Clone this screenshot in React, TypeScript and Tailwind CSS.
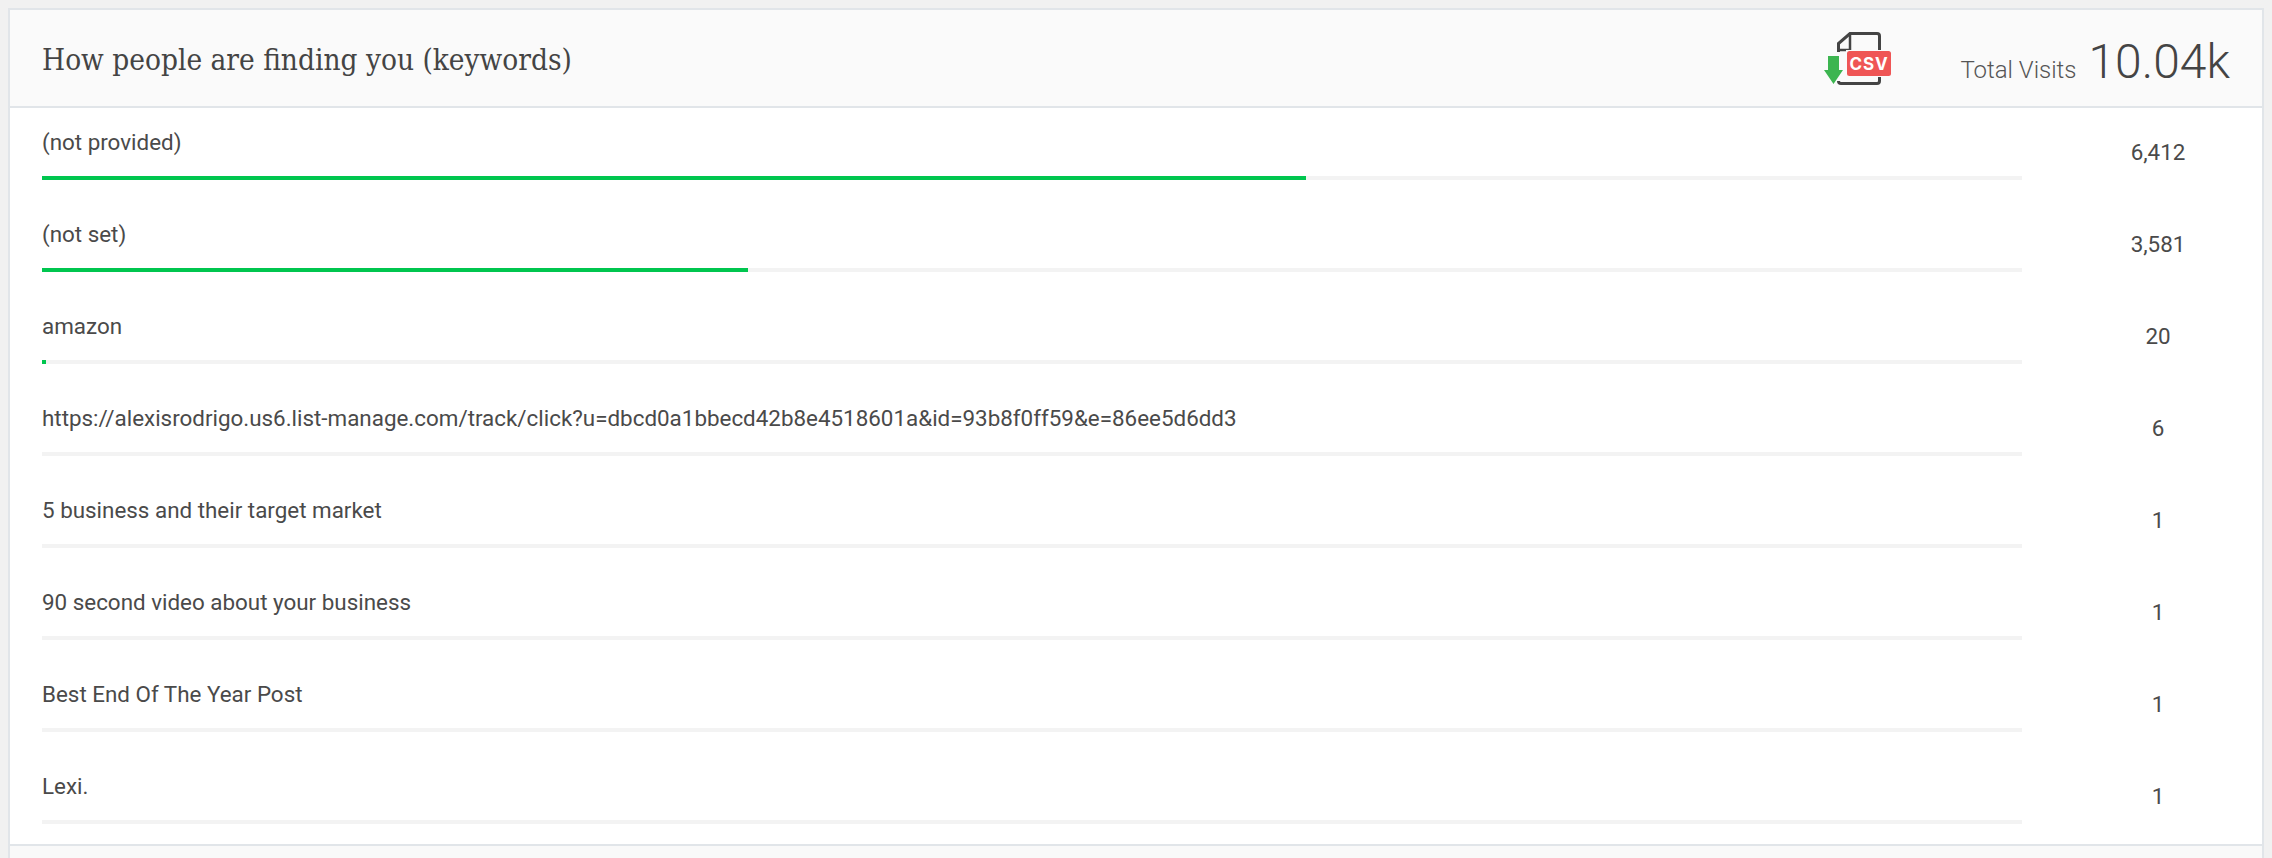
const rows = [
  { label: "(not provided)", value: "6,412", bar: 1264 },
  { label: "(not set)", value: "3,581", bar: 706 },
  { label: "amazon", value: "20", bar: 4 },
  { label: "https://alexisrodrigo.us6.list-manage.com/track/click?u=dbcd0a1bbecd42b8e4518601a&id=93b8f0ff59&e=86ee5d6dd3", value: "6", bar: 0 },
  { label: "5 business and their target market", value: "1", bar: 0 },
  { label: "90 second video about your business", value: "1", bar: 0 },
  { label: "Best End Of The Year Post", value: "1", bar: 0 },
  { label: "Lexi.", value: "1", bar: 0 },
];

function CsvIcon() {
  return (
    <svg width="70" height="56" viewBox="0 0 70 56" className="block">
      <path d="M14.5 22 V13.5 L26 3.5 H53 Q55.5 3.5 55.5 6 V22" fill="none" stroke="#444444" strokeWidth="3" />
      <path d="M26 3.5 V20 H14.5" fill="none" stroke="#444444" strokeWidth="2.5" />
      <path d="M14.5 51 Q14.5 53.5 17 53.5 H53 Q55.5 53.5 55.5 51 V46" fill="none" stroke="#444444" strokeWidth="3" />
      <rect x="22" y="20" width="46" height="27" fill="#fafafa" />
      <rect x="23" y="21" width="44" height="25" rx="2.5" fill="#ef5555" />
      <text x="45" y="39.5" textAnchor="middle" fill="#ffffff" fontFamily="Inter, sans-serif" fontWeight="700" fontSize="17" letterSpacing="0.8">CSV</text>
      <path d="M4 26 H15 V40 H19 L9.5 54 L0 40 H4 Z" fill="#3cb550" />
    </svg>
  );
}

export default function App() {
  return (
    <div className="h-[858px] w-[2272px] bg-[#f1f1f1] pt-2 pl-2 pr-2 font-['Roboto',sans-serif] text-[#4a4a4a]">
      <div className="flex h-[850px] flex-col border-x-2 border-t-2 border-[#e1e5e9] bg-white">
        <div className="flex h-[98px] items-center justify-between border-b-2 border-[#e1e5e9] bg-[#fafafa] pl-8 pr-8">
          <h2 className="pt-1.5 font-['DejaVu_Serif_Condensed','DejaVu_Serif',serif] text-[29.5px] leading-none text-[#444444]">
            How people are finding you (keywords)
          </h2>
          <div className="flex items-center">
            <CsvIcon />
            <div className="mt-2.5 ml-[66px] flex items-baseline">
              <span className="text-[24px] font-light text-[#555555]">Total Visits</span>
              <span className="ml-3 text-[48px] leading-none font-light text-[#444444]">10.04k</span>
            </div>
          </div>
        </div>
        <div className="flex flex-col">
          {rows.map((r) => (
            <div key={r.label} className="flex h-[92px] pl-8">
              <div className="flex w-[1980px] flex-col">
                <div className="mt-[20px] h-[28px] text-[22.4px] leading-[28px]">{r.label}</div>
                <div className="mt-[20px] h-1 w-full bg-[#f3f3f3]">
                  <div className="h-1 bg-[#00c64f]" style={{ width: r.bar }} />
                </div>
              </div>
              <div className="ml-8 flex-1 pt-[30px] text-center text-[22.4px] leading-[28px]">{r.value}</div>
            </div>
          ))}
        </div>
        <div className="flex-1 border-t-2 border-[#e1e5e9] bg-[#f9f9f9]" />
      </div>
    </div>
  );
}
